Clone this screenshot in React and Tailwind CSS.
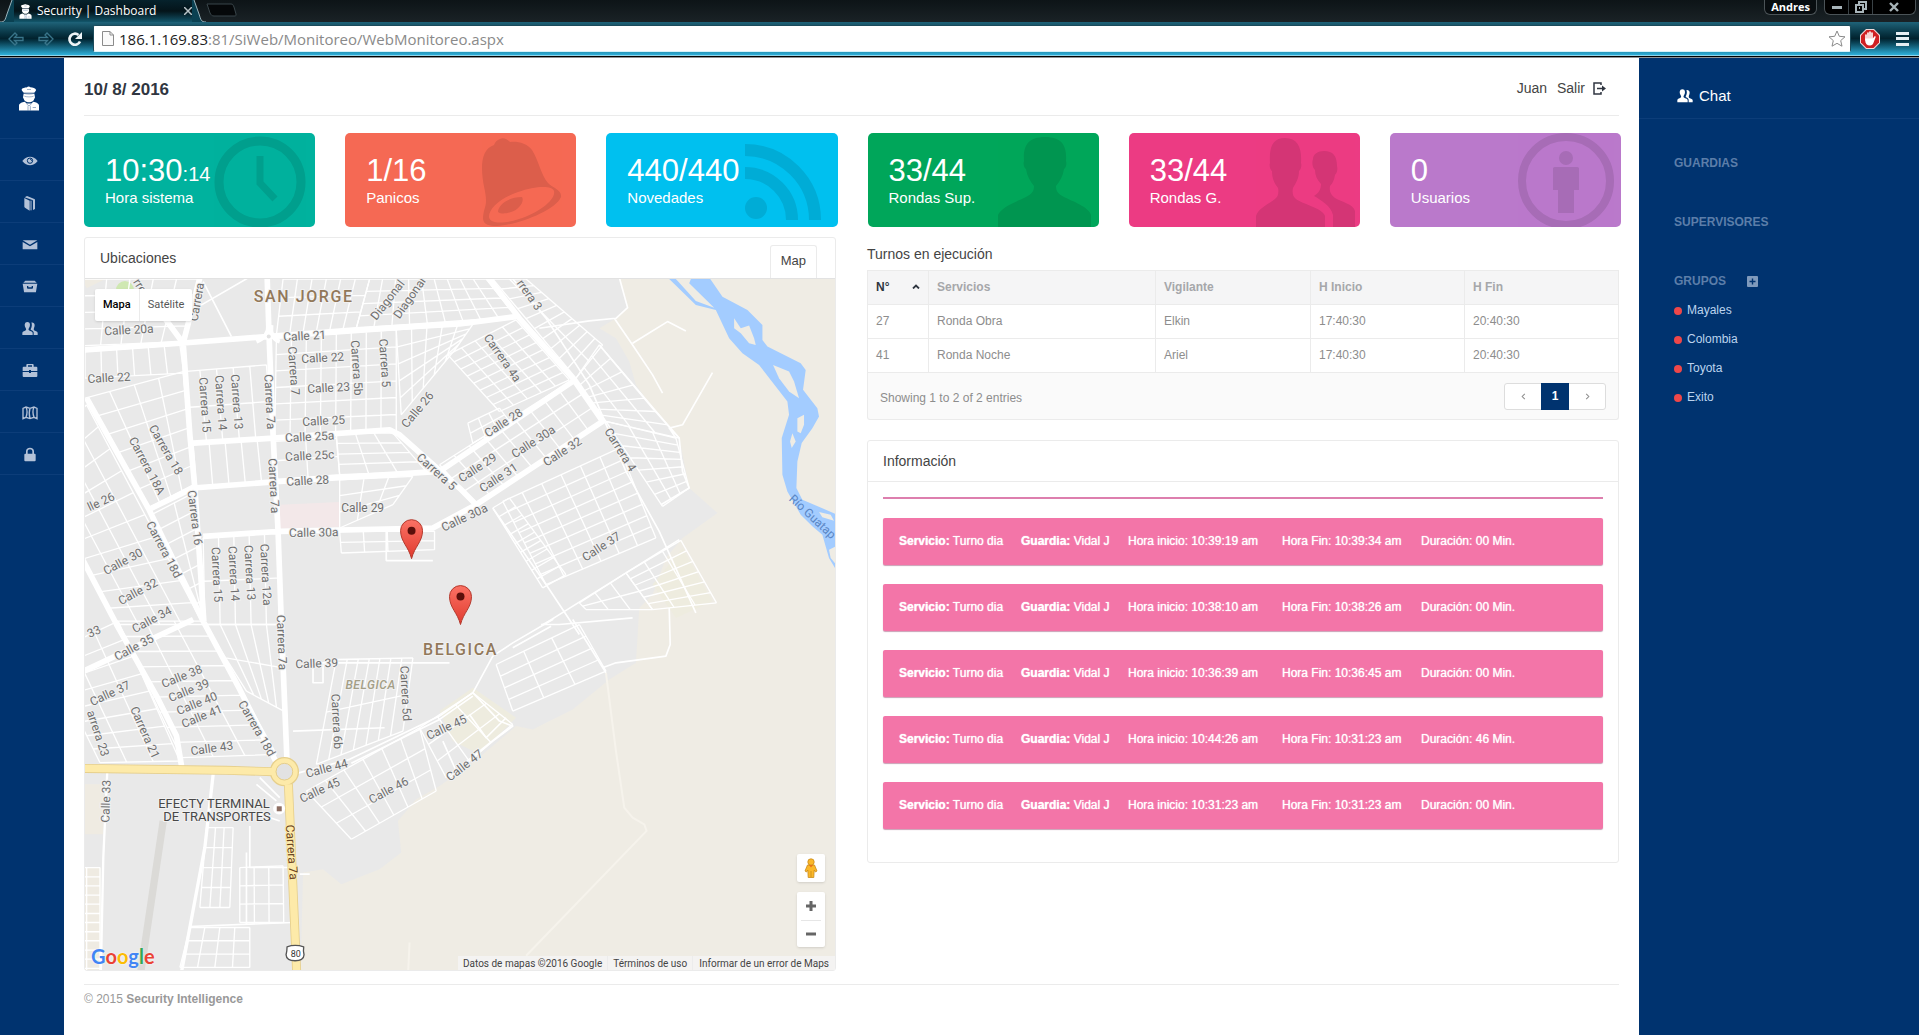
import React from "react";

/* ---------- Small icons ---------- */

function Officer({ className }) {
  return (
    <svg viewBox="0 0 60 74" className={className} aria-hidden="true">
      <g fill="#fff">
        <path d="M8 10C9 5 18 4 24 3c2-3 8-3 10 0 7 1 16 3 17 8 0 4-3 6-5 9H14C12 16 8 14 8 10Z" />
        <path d="M14 22h32l2 12c-1 3-3 5-4 8-3 4-9 6-14 6s-11-2-14-6c-1-3-3-5-4-8Z" />
        <path d="M0 73V58c1-7 9-9 17-11l6 5h14l6-5c8 2 16 4 17 11v15Z" />
      </g>
      <path d="M13 21c10 4 24 4 34 0M16 30c9 3 19 3 28 0M24 10h12" fill="none" stroke="#00336f" strokeWidth="2" opacity=".55" />
      <path d="M23 54l7 5 7-5M27 60v13M34 60v13M41 64h10" fill="none" stroke="#00336f" strokeWidth="2" opacity=".6" />
    </svg>
  );
}

function Users({ className }) {
  return (
    <svg viewBox="0 0 48 42" className={className} fill="currentColor" aria-hidden="true">
      <path d="M1 40v-7c1-4 8-5 11-8 1-2 0-4-1-6-2-3-3-7-3-10C9 3 12 1 16 1s8 2 8 8c0 3-1 7-3 10-1 2-2 4-1 6 3 3 11 4 12 8v7Z" />
      <path d="M28 3c5-1 10 1 10 8 0 3-1 6-2 8-1 3-1 5 0 7 3 2 10 3 11 7v7H35v-8c-1-4-5-6-9-8 0-2 1-4 2-6 2-5 2-11 0-16Z" />
    </svg>
  );
}

const navIcons = {
  eye: (
    <>
      <path d="M1 24C8 14 16 11 24 11s16 3 23 13c-7 9-15 13-23 13S8 33 1 24Z" fill="currentColor" />
      <circle cx="24" cy="23" r="8" fill="none" stroke="#00336f" strokeWidth="3" />
      <path d="M24 19c3 0 5 2 5 5" fill="none" stroke="#00336f" strokeWidth="3" />
    </>
  ),
  book: (
    <>
      <path d="M7 9l16 8v30L9 38c-2-1-2-2-2-4Z" fill="currentColor" />
      <path d="M8 7l7-4 22 9c2 1 2 2 2 4v26l-6 3V18c0-1 0-2-2-3Z" fill="currentColor" />
      <path d="M27 17v29" stroke="currentColor" strokeWidth="3" />
    </>
  ),
  mail: <path d="M2 10h44L24 23ZM2 15l22 13 22-13v22H2Z" fill="currentColor" />,
  drawer: (
    <path
      d="M10 5h28l6 6H4ZM2 14h44l-4 24c0 2-1 2-3 2H9c-2 0-3 0-3-2ZM15 21v5c0 2 1 3 3 3h12c2 0 3-1 3-3v-5h-4v4H19v-4Z"
      fill="currentColor"
      fillRule="evenodd"
    />
  ),
  users: (
    <g fill="currentColor">
      <path d="M1 42v-7c1-4 8-5 11-8 1-2 0-4-1-6-2-3-3-7-3-10C9 5 12 3 16 3s8 2 8 8c0 3-1 7-3 10-1 2-2 4-1 6 3 3 11 4 12 8v7Z" />
      <path d="M28 5c5-1 10 1 10 8 0 3-1 6-2 8-1 3-1 5 0 7 3 2 10 3 11 7v7H35v-8c-1-4-5-6-9-8 0-2 1-4 2-6 2-5 2-11 0-16Z" />
    </g>
  ),
  briefcase: (
    <path
      d="M13 11V7c0-3 1-4 4-4h14c3 0 4 1 4 4v4h8c2 0 3 1 3 3v10H27v-3h-6v3H2V14c0-2 1-3 3-3ZM18 7v4h12V7ZM2 27h19v3h6v-3h19v12c0 2-1 3-3 3H5c-2 0-3-1-3-3Z"
      fill="currentColor"
      fillRule="evenodd"
    />
  ),
  map: (
    <path
      d="M3 10l9-4 12 4 12-4 9 4v31l-9-4-12 4-12-4-9 4ZM12 6c4 9 4 20 0 31M24 10c-3 9-3 20 0 31M36 6c-4 9-4 20 0 31"
      fill="none"
      stroke="currentColor"
      strokeWidth="4"
    />
  ),
  lock: (
    <path
      d="M12 20v-7c0-7 5-11 12-11s12 4 12 11v7h2c2 0 3 1 3 3v17c0 2-1 3-3 3H10c-2 0-3-1-3-3V23c0-2 1-3 3-3ZM17 20h14v-7c0-4-3-6-7-6s-7 2-7 6Z"
      fill="currentColor"
      fillRule="evenodd"
    />
  ),
};

/* ---------- Browser window ---------- */

function BrowserChrome() {
  return (
    <header className="font-['Open_Sans',sans-serif]">
      <div className="flex h-[22px] items-start justify-between bg-linear-to-b from-[#0d1417] to-[#1a2226]">
        <div className="flex">
          <div className="flex h-[22px] w-[206px] items-center">
            <svg viewBox="0 0 14 22" className="h-[22px] w-3.5 shrink-0" aria-hidden="true">
              <path d="M0 22C5 22 5 20 7 14L12 0h2v22Z" fill="#0a4152" />
              <path d="M0 22C5 22 5 20 7 14L12 0" fill="none" stroke="#9bb4bd" />
            </svg>
            <div className="flex h-full flex-1 items-center bg-linear-to-b from-[#06222c] via-[#04141a] to-[#12566b] pl-1">
              <Officer className="h-[15px] w-[15px]" />
              <span className="ml-1 flex-1 text-[12px] whitespace-nowrap text-white">Security | Dashboard</span>
              <button type="button" aria-label="Cerrar pestaña" className="text-[#b9c4c8]">
                <svg viewBox="0 0 8 8" className="h-2 w-2" aria-hidden="true">
                  <path d="M0 0l8 8M8 0L0 8" stroke="currentColor" strokeWidth="1.5" />
                </svg>
              </button>
            </div>
            <svg viewBox="0 0 14 22" className="h-[22px] w-3.5 shrink-0" aria-hidden="true">
              <path d="M14 22C9 22 9 20 7 14L2 0H0v22Z" fill="#0a4152" />
              <path d="M14 22C9 22 9 20 7 14L2 0" fill="none" stroke="#9bb4bd" />
            </svg>
          </div>
          <svg viewBox="0 0 32 14" className="mt-[3px] h-3.5 w-8" aria-hidden="true">
            <path d="M1 1h24c2 0 2 1 3 3l2 7c0 2 0 2-2 2H8c-2 0-3-1-4-3Z" fill="#05080a" stroke="#39454a" />
          </svg>
        </div>
        <div className="mr-[3px] flex gap-[7px]">
          <button type="button" className="h-[15px] rounded-b-md border border-t-0 border-[#4b5357] bg-[#080d10] px-1.5 text-[11px] leading-3 font-bold text-white">
            Andres
          </button>
          <div className="flex h-[15px] rounded-b-md border border-t-0 border-[#4b5357] bg-black text-[#a8b4b9]">
            <button type="button" aria-label="Minimizar" className="flex w-6 items-center justify-center border-r border-[#3a4246]">
              <span className="h-[3px] w-2.5 bg-current" />
            </button>
            <button type="button" aria-label="Restaurar" className="flex w-6 items-center justify-center border-r border-[#3a4246]">
              <svg viewBox="0 0 12 12" className="h-3 w-3" fill="none" stroke="currentColor" strokeWidth="2" aria-hidden="true">
                <path d="M4 3V1h7v7H9M1 4h7v7H1ZM4 7h1" />
              </svg>
            </button>
            <button type="button" aria-label="Cerrar" className="flex w-[42px] items-center justify-center">
              <svg viewBox="0 0 10 10" className="h-2.5 w-2.5" aria-hidden="true">
                <path d="M1 1l8 8M9 1L1 9" stroke="currentColor" strokeWidth="2.4" />
              </svg>
            </button>
          </div>
        </div>
      </div>
      <div className="flex h-[33px] items-center bg-linear-to-b from-[#1f6379] via-[#02222e] to-[#2fb0da]">
        <div className="flex w-[87px] items-center justify-between pr-1 pl-2">
          <button type="button" aria-label="Atrás" className="text-[#39758a]">
            <svg viewBox="0 0 16 14" className="h-3.5 w-4" fill="none" stroke="currentColor" strokeWidth="1.3" aria-hidden="true">
              <path d="M1 7l6-6 2 2-2.500 2.500H15v3H6.500L9 11l-2 2Z" />
            </svg>
          </button>
          <button type="button" aria-label="Adelante" className="text-[#39758a]">
            <svg viewBox="0 0 16 14" className="h-3.5 w-4" fill="none" stroke="currentColor" strokeWidth="1.3" aria-hidden="true">
              <path d="M15 7L9 1 7 3l2.500 2.500H1v3h8.500L7 11l2 2Z" />
            </svg>
          </button>
          <button type="button" aria-label="Recargar" className="text-[#eef4f6]">
            <svg viewBox="0 0 16 16" className="h-4 w-4" aria-hidden="true">
              <path d="M13 10.500A5.500 5.500 0 1 1 11.500 4" fill="none" stroke="currentColor" strokeWidth="2.700" />
              <path d="M15 1v7H8Z" fill="currentColor" />
            </svg>
          </button>
        </div>
        <div className="ml-1.5 flex h-[27px] flex-1 items-center rounded-xs border border-[#1c4b5b] border-b-[#d6f3fb] bg-white px-2">
          <svg viewBox="0 0 12 15" className="h-[15px] w-3 shrink-0" fill="#fafafa" stroke="#8b8b8b" aria-hidden="true">
            <path d="M.5.5H8L11.500 4v10.500H.5ZM8 .5V4h3.500" />
          </svg>
          <p className="ml-[5px] flex-1 text-[15px] leading-6 text-[#8a8a8a]">
            <span className="text-[#1d1d1d]">186.1.169.83</span>:81/SiWeb/Monitoreo/WebMonitoreo.aspx
          </p>
          <button type="button" aria-label="Marcador" className="-mr-1">
            <svg viewBox="0 0 18 18" className="h-[18px] w-[18px]" fill="#fff" stroke="#8a8a8a" aria-hidden="true">
              <path d="M9 1l2.300 5.300 5.700.5-4.300 3.800 1.300 5.600L9 13.300 4 16.200l1.300-5.600L1 6.800l5.700-.5Z" />
            </svg>
          </button>
        </div>
        <button type="button" aria-label="Bloqueador" className="ml-[9px]">
          <svg viewBox="0 0 20 20" className="h-5 w-5" aria-hidden="true">
            <path d="M6 0h8l6 6v8l-6 6H6l-6-6V6Z" fill="#f1dada" />
            <path d="M6.500 1h7L19 6.500v7L13.500 19h-7L1 13.500v-7Z" fill="#cf1f22" />
            <path d="M6 11V6m2 4V4m2 6V3m2 7V4" stroke="#fff" strokeWidth="1.600" strokeLinecap="round" />
            <path d="M5.200 9.500h7.600l2-2.500 1 .8-2.300 6c-.7 1.800-1.700 2.700-3.500 2.700-3 0-4.800-2-4.800-5Z" fill="#fff" />
          </svg>
        </button>
        <button type="button" aria-label="Menú" className="mr-2.5 ml-4 flex h-3.5 w-[13px] flex-col justify-between">
          <span className="h-[3px] w-full bg-[#e6eef2]" />
          <span className="h-[3px] w-full bg-[#e6eef2]" />
          <span className="h-[3px] w-full bg-[#e6eef2]" />
        </button>
      </div>
      <div className="h-[3px] border-t border-b border-t-[#8ed4ea] border-b-[#8f9396] bg-black" />
    </header>
  );
}

/* ---------- Sidebars ---------- */

const navItems = [
  ["eye", "Monitoreo"],
  ["book", "Libro"],
  ["mail", "Mensajes"],
  ["drawer", "Archivo"],
  ["users", "Usuarios"],
  ["briefcase", "Servicios"],
  ["map", "Mapa"],
  ["lock", "Bloquear"],
];

function Sidebar() {
  return (
    <aside className="w-16 shrink-0 bg-[#00336f]">
      <div className="flex h-20 items-center justify-center pt-1 pb-[3px]">
        <a href="#inicio" aria-label="Inicio" className="-ml-1.5">
          <Officer className="h-[25px] w-5" />
        </a>
      </div>
      <nav aria-label="Principal" className="border-b border-[#0c3d79]">
        {navItems.map(([icon, label]) => (
          <a
            key={icon}
            href={"#" + icon}
            aria-label={label}
            className="flex h-[42px] items-center justify-center border-t border-[#0c3d79] pt-0.5 pr-1 text-[#b3c2d8]"
          >
            <svg viewBox="0 0 48 48" className="h-4 w-4" aria-hidden="true">
              {navIcons[icon]}
            </svg>
          </a>
        ))}
      </nav>
    </aside>
  );
}

function Chat() {
  return (
    <aside className="w-[280px] shrink-0 bg-[#00336f]">
      <h2 className="flex h-[61px] items-center gap-1.5 border-b border-[#0c3d79] pt-4 pl-[38px] text-[15px] text-white">
        <Users className="h-3.5 w-4" />
        Chat
      </h2>
      <div className="pl-[35px] text-[12px] leading-[29px]">
        <h3 className="mt-[30px] font-bold text-[#5c7ea9]">GUARDIAS</h3>
        <h3 className="mt-[30px] font-bold text-[#5c7ea9]">SUPERVISORES</h3>
        <h3 className="mt-[30px] flex items-center gap-[21px] font-bold text-[#5c7ea9]">
          GRUPOS
          <button type="button" aria-label="Agregar grupo" className="text-[#7f9abc]">
            <svg viewBox="0 0 11 11" className="h-[11px] w-[11px]" aria-hidden="true">
              <rect width="11" height="11" rx="1" fill="currentColor" />
              <path d="M5.500 2.500v6M2.500 5.500h6" stroke="#00336f" strokeWidth="1.400" />
            </svg>
          </button>
        </h3>
        <ul>
          {["Mayales", "Colombia", "Toyota", "Exito"].map((g) => (
            <li key={g}>
              <a href={"#" + g} className="flex items-center gap-[5px] text-[#bcd3ee]">
                <span className="h-2 w-2 rounded-full bg-[#ee4749]" />
                {g}
              </a>
            </li>
          ))}
        </ul>
      </div>
    </aside>
  );
}

/* ---------- Stat tiles ---------- */

const tiles = [
  {
    value: "10:30",
    small: ":14",
    label: "Hora sistema",
    bg: "bg-[#00b29e]",
    art: (
      <g fill="none" stroke="#000">
        <circle cx="176" cy="49" r="41" strokeWidth="9" />
        <path d="M176 23v27l15 16" strokeWidth="7" />
      </g>
    ),
  },
  {
    value: "1/16",
    label: "Panicos",
    bg: "bg-[#f56954]",
    art: (
      <>
        <path
          fillRule="evenodd"
          d="M155 6c-3 1-5 3-6 6-9 3-12 12-12 23 0 15 4 23 4 33 0 6-3 10-3 18 1 6 6 7 14 7 20-1 58-15 64-29 1-7-8-9-13-14-7-8-9-22-16-33-5-7-15-9-22-8-3-3-7-5-10-3ZM144 84c0-9 12-19 29-25 17-6 34-7 36-1 2 9-16 22-35 28-15 5-29 5-30-2Z"
        />
        <path d="M153 79c0-7 10-15 24-15 3 5-4 13-11 15-6 2-10 2-13 0Z" />
      </>
    ),
  },
  {
    value: "440/440",
    label: "Novedades",
    bg: "bg-[#00c0ef]",
    art: (
      <>
        <circle cx="149" cy="75" r="11" />
        <path d="M138 40a47 47 0 0 1 47 47M138 17a70 70 0 0 1 70 70" fill="none" stroke="#000" strokeWidth="12" />
      </>
    ),
  },
  {
    value: "33/44",
    label: "Rondas Sup.",
    bg: "bg-[#00a65a]",
    art: (
      <path d="M130 94V82c3-8 20-14 28-18 6-3 8-6 8-11-4-5-7-10-8-17-2-1-3-5-2-8-1-14 3-24 21-24s22 10 21 24c1 3 0 7-2 8-1 7-4 12-8 17 0 5 2 8 8 11 8 4 25 10 27 18v12Z" />
    ),
  },
  {
    value: "33/44",
    label: "Rondas G.",
    bg: "bg-[#ec3b83]",
    art: (
      <>
        <path d="M127 94V83c2-8 13-12 19-17 3-2 4-6 3-11-4-5-6-10-6-17-2-1-3-6-2-8-1-15 2-25 15-25s17 10 16 25c1 2 0 7-2 8 0 7-3 12-6 17-1 5 0 9 3 11 6 5 27 9 29 17v11Z" />
        <path d="M204 94V82c-2-9-12-15-19-19 5-3 7-7 7-12-4-4-6-9-6-14-3-3-3-8-2-11 0-5 5-8 11-8 9 0 13 5 13 15 1 3 0 7-2 9-1 5-2 8-5 11-1 5 1 9 5 12 7 4 18 6 20 13v16Z" />
      </>
    ),
  },
  {
    value: "0",
    label: "Usuarios",
    bg: "bg-[#ba79cb]",
    art: (
      <>
        <circle cx="176" cy="48" r="44" fill="none" stroke="#000" strokeWidth="8" />
        <circle cx="176" cy="25" r="7" />
        <path d="M165 34h22c2 0 2 1 2 2v21h-5v23h-16V57h-5V36c0-1 0-2 2-2Z" />
      </>
    ),
  },
];

function Tile({ value, small, label, bg, art }) {
  return (
    <article className={"relative h-[94px] overflow-hidden rounded-[5px] px-[21px] pt-5 text-white " + bg}>
      <svg viewBox="0 0 231 94" className="absolute top-0 right-0 h-[94px] w-[231px] opacity-10" aria-hidden="true">
        {art}
      </svg>
      <p className="relative text-[31px] leading-9">
        {value}
        {small && <span className="text-[20px] leading-5">{small}</span>}
      </p>
      <p className="relative text-[15px] leading-[18px]">{label}</p>
    </article>
  );
}

/* ---------- Street map ---------- */

// Draws the streets of a four-cornered district: nu columns by nv rows.
function District({ q, nu, nv, w = 4 }) {
  const [a, b, c, d] = q;
  const mix = (p, r, t) => [Math.round(p[0] + (r[0] - p[0]) * t), Math.round(p[1] + (r[1] - p[1]) * t)];
  const parts = [];
  for (let i = 0; i <= nu; i++) {
    parts.push("M" + mix(a, b, i / nu) + "L" + mix(d, c, i / nu));
  }
  for (let j = 0; j <= nv; j++) {
    parts.push("M" + mix(a, d, j / nv) + "L" + mix(b, c, j / nv));
  }
  return <path d={parts.join("")} strokeWidth={w} />;
}

const districts = [
  [[[310, 290], [560, 270], [578, 490], [330, 505]], 5, 2],
  [[[15, 230], [300, 210], [312, 295], [15, 310]], 6, 1],
  [[[340, 510], [580, 490], [595, 625], [350, 640]], 5, 1],
  [[[370, 790], [600, 770], [606, 1050], [375, 1050]], 5, 2],
  [[[375, 1050], [606, 1050], [612, 1310], [500, 1250]], 5, 2],
  [[[590, 190], [950, 165], [950, 470], [585, 485]], 8, 6],
  [[[950, 165], [1180, 148], [1130, 220], [965, 420]], 5, 5],
  [[[585, 500], [770, 490], [780, 600], [590, 615]], 2, 2],
  [[[770, 475], [940, 475], [1040, 590], [780, 600]], 3, 4],
  [[[780, 615], [1000, 605], [940, 690], [780, 760]], 3, 3],
  [[[780, 770], [1065, 770], [1065, 825], [785, 835]], 4, 2],
  [[[-60, 12], [360, 12], [305, 200], [-60, 215]], 6, 4],
  [[[610, 12], [870, 12], [830, 160], [590, 180]], 6, 3],
  [[[870, 12], [1220, 12], [1310, 125], [830, 160]], 9, 4],
  [[[15, 370], [310, 290], [340, 630], [205, 700]], 4, 6],
  [[[215, 720], [350, 650], [375, 1030], [365, 1035]], 2, 7],
  [[[20, 390], [370, 1050], [110, 1050], [-150, 560]], 10, 4],
  [[[110, 1040], [370, 1040], [590, 1440], [305, 1450]], 3, 9],
  [[[-100, 1140], [115, 1040], [300, 1460], [60, 1465]], 3, 8],
  [[[1105, 240], [1310, 135], [1470, 315], [1260, 410]], 5, 8],
  [[[1240, 12], [1340, 12], [1570, 210], [1490, 310]], 2, 10],
  [[[1490, 310], [1560, 210], [1800, 490], [1580, 440]], 3, 7],
  [[[1580, 440], [1790, 490], [1830, 640], [1750, 695]], 3, 7],
  [[[1165, 445], [1260, 400], [1290, 440], [1180, 505]], 3, 2],
  [[[1080, 570], [1480, 315], [1570, 440], [1190, 690]], 9, 3],
  [[[1270, 680], [1620, 520], [1730, 790], [1400, 930]], 6, 8],
  [[[1240, 700], [1290, 670], [1460, 900], [1390, 940]], 1, 9],
  [[[1640, 895], [1805, 797], [1912, 985], [1720, 1005]], 3, 6],
  [[[1500, 985], [1640, 895], [1720, 1005], [1520, 1005]], 3, 2],
  [[[1250, 1170], [1500, 1050], [1580, 1190], [1300, 1310]], 3, 4],
  [[[680, 1550], [1020, 1360], [1070, 1550], [815, 1695]], 6, 3],
  [[[1020, 1360], [1180, 1255], [1300, 1350], [1100, 1510]], 3, 3],
  [[[770, 1155], [1000, 1150], [970, 1370], [710, 1470]], 7, 2],
  [[[380, 1660], [460, 1660], [450, 1900], [360, 1900]], 3, 4],
  [[[480, 1780], [610, 1775], [612, 1945], [480, 1945]], 3, 3],
  [[[330, 1960], [510, 1960], [510, 2080], [300, 2080]], 4, 3],
  [[[-20, 1780], [60, 1780], [60, 2110], [-20, 2110]], 2, 12],
];

const avenues =
  "M10 225L300 205 560 185 830 165 1140 147 1310 125M562 0L568 185 580 480 595 770 605 1050 622 1465" +
  "M362 0L310 205 330 480 345 640 372 1040M240 110L310 205M20 370L205 700 370 1040 480 1245 590 1465" +
  "M0 840L110 1050 230 1265 290 1385 305 1475M205 705L340 640 600 620 1080 590 1480 320" +
  "M340 505L580 490 930 465 960 480 1140 640 1190 690 1570 440 1480 310 1320 130 1220 0" +
  "M370 785L600 770 1060 760 1190 690M10 1190L340 1035";

// Street labels: text, x, y, angle. Coordinates are thirds of a map unit.
const streets = [
  ["Calle 20a", 146, 166, -3], ["Calle 22", 87, 308, -3], ["Calle 21", 675, 182, -3], ["Calle 22", 728, 250, -3],
  ["Calle 23", 748, 338, -3], ["Calle 25", 732, 438, -3], ["Calle 25a", 690, 486, -3], ["Calle 25c", 690, 543, -3],
  ["Calle 28", 684, 617, -3], ["Calle 29", 848, 698, 0], ["Calle 30a", 702, 773, -1], ["Carrera 15", 375, 390, 86],
  ["Carrera 14", 423, 385, 86], ["Carrera 13", 472, 380, 86], ["Carrera 7a", 571, 380, 87], ["Carrera 7", 643, 287, 86],
  ["Carrera 5b", 830, 280, 86], ["Carrera 5", 916, 265, 86], ["Calle 26", 1015, 405, -50], ["Carrera 5", 1070, 590, 42],
  ["Carrera 18", 258, 525, 60], ["Carrera 18A", 200, 572, 62], ["Carrera 7a", 582, 632, 87], ["Carrera 16", 346, 730, 83],
  ["Carrera 18d", 252, 825, 62], ["Carrera 15", 412, 900, 87], ["Carrera 14", 462, 897, 87], ["Carrera 13", 509, 893, 87],
  ["Carrera 12a", 557, 900, 87], ["lle 26", 62, 680, -25], ["Calle 30", 128, 862, -28], ["Calle 32", 175, 950, -28],
  ["Calle 34", 217, 1035, -28], ["Calle 35", 163, 1120, -28], ["33", 42, 1070, -25], ["Carrera", 350, 80, -80],
  ["rre", 180, 34, 58], ["Diagonal", 923, 76, -52], ["Diagonal", 990, 70, -55], ["Calle 37", 90, 1256, -25],
  ["Calle 38", 307, 1205, -22], ["Calle 39", 327, 1247, -22], ["Calle 40", 350, 1288, -22], ["Calle 41", 367, 1327, -22],
  ["Calle 43", 395, 1422, -8], ["arrera 23", 54, 1378, 72], ["Carrera 21", 195, 1375, 66], ["Carrera 18d", 532, 1362, 60],
  ["Carrera 7a", 605, 1105, 88], ["Calle 39", 710, 1168, -2], ["Carrera 5d", 979, 1258, 87], ["Carrera 6b", 771, 1340, 87],
  ["Calle 44", 740, 1483, -15], ["Calle 45", 720, 1547, -25], ["Calle 46", 927, 1548, -28], ["Calle 45", 1102, 1360, -25],
  ["Calle 47", 1155, 1472, -38], ["Calle 33", 77, 1580, -88], ["rrera 3", 1350, 60, 55], ["Carrera 4a", 1270, 250, 55],
  ["Calle 28", 1273, 443, -33], ["Calle 30a", 1363, 500, -33], ["Calle 32", 1448, 530, -33], ["Calle 29", 1195, 578, -33],
  ["Calle 31", 1257, 610, -33], ["Calle 30a", 1155, 728, -25], ["Carrera 4", 1622, 525, 58], ["Calle 37", 1567, 817, -33],
];

function Pin({ x, y }) {
  return (
    <g transform={"translate(" + x + " " + y + ")"}>
      <path d="M0 0C-3-12-11-17-11-28a11 11 0 0 1 22 0C11-17 3-12 0 0Z" fill="url(#pin)" stroke="#b3382c" />
      <circle cx="0" cy="-28" r="4" fill="#5a0f0b" />
    </g>
  );
}

function StreetMap() {
  return (
    <svg
      viewBox="5 4 751 692"
      preserveAspectRatio="xMinYMin slice"
      className="block h-full w-full font-['Roboto',sans-serif]"
      role="img"
      aria-label="Mapa de ubicaciones"
    >
      <defs>
        <linearGradient id="pin" x1="0" y1="0" x2="0" y2="1">
          <stop offset="0" stopColor="#fb7265" />
          <stop offset="1" stopColor="#e03a2e" />
        </linearGradient>
      </defs>
      <g transform="scale(0.33333)" fill="none" strokeLinejoin="round">
        <rect x="0" y="0" width="2400" height="2200" fill="#e9e9e9" />
        <path
          d="M1618 0L1645 98 1610 130 1560 160 1610 190 1650 260 1670 330 1720 400 1800 490 1830 640 1915 715 1810 790 1760 850 1720 960 1680 1000 1670 1165 1590 1215 1480 1305 1360 1365 1310 1355 1180 1465 1080 1535 1010 1575 955 1640 965 1735 900 1785 785 1830 730 1785 670 1795 660 2200H2400V0Z"
          fill="#efece4"
        />
        <path d="M1180 1240L1080 1310 1120 1400 1200 1440 1310 1330ZM1720 930L1810 820 1900 980 1790 1030Z" fill="#eeecdf" />
        <path d="M0 1530H70V1680H0ZM0 1780H62V2120H0ZM0 0H100L20 40Z" fill="#efebe2" />
        <path d="M600 690L780 682V756L600 762Z" fill="#f3e8e9" />
        <circle cx="135" cy="45" r="27" fill="#cfe8b2" />
        <path d="M250 1640L180 2110" stroke="#dbdad7" strokeWidth="22" />

        <g fill="#a3ccff">
          <path d="M1840 0H1885L1930 65 2005 105 2050 150V195L2065 215 2165 265 2180 285 2172 345 2215 400 2220 425 2200 460 2168 505 2155 560 2152 640 2170 675 2280 722V900L2250 850 2230 780 2200 755 2165 720 2125 650 2110 600 2108 490 2130 420 2125 380 2040 270 1990 235 1950 190 1910 105 1850 90 1770 12 1790 12 1850 78 1905 98 1830 25Z" />
        </g>
        <g fill="#efece4">
          <path d="M1965 130L1985 160 2010 152 2025 190 2030 210 2010 205 1985 175 1965 160Z" />
          <path d="M2082 270L2130 290 2145 320 2160 370 2130 350 2100 310Z" />
          <path d="M2155 430L2175 420 2175 450 2165 475 2155 470ZM2140 475L2150 500 2138 520 2133 500Z" />
          <path d="M2220 712L2255 720 2265 738 2230 728ZM2250 825L2280 810V880L2255 850Z" />
        </g>

        <g stroke="#fff">
          {districts.map(([q, nu, nv], i) => (
            <District key={i} q={q} nu={nu} nv={nv} />
          ))}
          <g strokeWidth="5">
            <path d="M370 20L455 185M520 0L330 110M920 770V858H1060M640 1370L915 1360M690 1165H1110M700 1165V1225H730V1170" />
            <path d="M1618 0L1645 98 1610 130 1530 138 1380 160M1605 130L1660 210 1720 300 1750 355M1660 205L1700 180 1765 140 1820 168M1900 293L1810 450 1770 460 1790 490M1560 210L1720 400 1800 490 1810 590 1830 640 1745 690" />
            <path d="M1300 12L1400 130 1530 330 1640 590 1740 770 1850 1015M1400 1045L1800 795M1385 1050L1440 1050 1660 1030M1240 700L1400 930 1500 1080" />
            <path d="M1390 1050L1420 1035 1300 1105 1240 1145 1180 1255 1080 1325 810 1455 640 1500M1415 1055L1300 1120M1180 1265L1080 1335 815 1467" />
            <path d="M1770 1000L1773 1110 1760 1145 1610 1165 1570 1180M1480 1035L1580 1195" />
            <path d="M1180 1255L1260 1340 1300 1355 1240 1400 1110 1510M1170 1320L1220 1390 1280 1330M1090 1400L1130 1490" />
            <path d="M330 1957L640 1945M600 1640L540 1620M660 1800H690M500 1735V1950M510 1655V1780H640" />
            <path d="M540 1510L600 1570M530 1530L590 1580" />
          </g>
          <path d="M400 1500L375 1720 300 2120" strokeWidth="10" />
          <path d="M82 1490L70 1750 62 2120" strokeWidth="7" />
          <path d={avenues} strokeWidth="17" />
        </g>
        <path
          d="M1580 1195L1610 1430 1635 1600 1660 1630 1695 1650 1702 1670 1340 2045M990 2005L985 2110"
          stroke="#f6f3ec"
          strokeWidth="6"
        />
        <path d="M565 150Q568 185 530 200M600 200Q570 190 575 150" stroke="#fff" strokeWidth="12" />
        <circle cx="567" cy="185" r="6" fill="#e2e2e2" />

        <g stroke="#e6cf8c">
          <path d="M0 1482L440 1488 580 1492M626 1530L652 2120" strokeWidth="27" />
          <circle cx="614" cy="1492" r="34" strokeWidth="20" />
        </g>
        <g stroke="#fdeaa9">
          <path d="M0 1482L440 1488 580 1492M626 1530L652 2120" strokeWidth="22" />
          <circle cx="614" cy="1492" r="33" strokeWidth="14" />
        </g>
        <circle cx="614" cy="1492" r="25" fill="#e2e2e2" stroke="#e6cf8c" strokeWidth="3" />
        <circle cx="598" cy="1603" r="18" fill="#fff" />
        <rect x="591" y="1596" width="15" height="15" fill="#8d6f63" />
        <path d="M622 2018Q646 2010 672 2018Q670 2030 673 2042Q672 2060 646 2060Q620 2060 619 2042Q622 2030 622 2018Z" fill="#fff" stroke="#555" strokeWidth="4" />
      </g>

      <g fontSize="12" fill="#6f6f6f" stroke="#f1f1f1" strokeWidth="2" paintOrder="stroke" textAnchor="middle" dominantBaseline="central">
        {streets.map(([t, x, y, r], i) => (
          <text key={i} transform={"translate(" + Math.round(x / 3) + " " + Math.round(y / 3) + ") rotate(" + r + ")"}>
            {t}
          </text>
        ))}
        <text transform="translate(212 578) rotate(86)" fill="#6b4423" stroke="#fdeaa9">Carrera 7a</text>
        <text x="291" y="411" fill="#a39e86" fontStyle="italic" fontWeight="500" className="tracking-wider">BELGICA</text>
        <g fontSize="16" fontWeight="500" fill="#92785a" className="tracking-widest">
          <text x="224" y="22">SAN JORGE</text>
          <text x="381" y="375">BELGICA</text>
        </g>
        <g fontSize="13" fill="#484848" textAnchor="end">
          <text x="190" y="529">EFECTY TERMINAL</text>
          <text x="191" y="542">DE TRANSPORTES</text>
        </g>
        <text x="216" y="680" fontSize="9" fill="#333" stroke="none">80</text>
        <text transform="translate(712 222) rotate(43)" textAnchor="start" fill="#5a86c4" stroke="none">Río Guatap</text>
      </g>
      <Pin x={332} y={284} />
      <Pin x={381} y={350} />
    </svg>
  );
}

function MapPanel() {
  return (
    <section className="rounded-[3px] border border-[#ebebeb] bg-white">
      <div className="flex h-10 items-end justify-between pr-[18px] pl-[15px]">
        <h2 className="self-center text-[14px] text-[#444]">Ubicaciones</h2>
        <button type="button" className="relative -mb-px h-[34px] rounded-t-[3px] border border-b-0 border-[#ebebeb] bg-white px-2.5 pb-1 text-[13px] text-[#444]">
          Map
        </button>
      </div>
      <div className="relative h-[692px] overflow-hidden border-t border-[#e2e2e2] font-['Roboto',sans-serif]">
        <StreetMap />
        <div className="absolute top-2.5 left-2.5 flex h-8 rounded-[2px] bg-white text-[11px] shadow-sm">
          <button type="button" className="border-r border-[#ebebeb] px-2 font-medium text-black">Mapa</button>
          <button type="button" className="px-2 text-[#565656]">Satélite</button>
        </div>
        <div className="absolute right-2.5 bottom-[23px] flex w-7 flex-col gap-2.5">
          <button type="button" aria-label="Street View" className="flex h-7 items-center justify-center rounded-[2px] bg-white shadow-sm">
            <svg viewBox="0 0 14 20" className="h-5 w-3.5" aria-hidden="true">
              <path d="M3.500 7h7l2.500 6-1.500 1-1.300-2-.4 7.500H4.200L3.800 12l-1.300 2L1 13Z" fill="#fbb829" stroke="#c98a1b" strokeWidth=".8" />
              <circle cx="7" cy="4" r="3.200" fill="#fbb829" stroke="#c98a1b" strokeWidth=".8" />
              <path d="M5 7l2 2.500L9 7Z" fill="#e8711a" />
              <path d="M7 13v6" stroke="#c98a1b" strokeWidth=".8" />
            </svg>
          </button>
          <div className="flex flex-col rounded-[2px] bg-white text-[#666] shadow-sm">
            <button type="button" aria-label="Acercar" className="flex h-7 items-center justify-center">
              <svg viewBox="0 0 12 12" className="h-3 w-3" aria-hidden="true">
                <path d="M6 1v10M1 6h10" stroke="currentColor" strokeWidth="3" />
              </svg>
            </button>
            <span className="mx-1 h-px bg-[#e6e6e6]" />
            <button type="button" aria-label="Alejar" className="flex h-[26px] items-center justify-center">
              <svg viewBox="0 0 12 12" className="h-3 w-3" aria-hidden="true">
                <path d="M1 6h10" stroke="currentColor" strokeWidth="3" />
              </svg>
            </button>
          </div>
        </div>
        <a href="#google" className="absolute bottom-1 left-1.5 font-['Lato',sans-serif] text-[20px] leading-5 font-bold [text-shadow:0_0_2px_#fff]">
          <span className="text-[#4285f4]">G</span>
          <span className="text-[#ea4335]">o</span>
          <span className="text-[#fbbc05]">o</span>
          <span className="text-[#4285f4]">g</span>
          <span className="text-[#34a853]">l</span>
          <span className="text-[#ea4335]">e</span>
        </a>
        <div className="absolute right-0 bottom-0 flex h-3.5 items-center bg-[#f5f5f5]/80 text-[10px] text-[#444]">
          <span className="px-[5px]">Datos de mapas ©2016 Google</span>
          <a href="#terminos" className="border-l border-[#ececec] px-[5px]">Términos de uso</a>
          <a href="#error" className="border-l border-[#ececec] px-1.5">Informar de un error de Maps</a>
        </div>
      </div>
    </section>
  );
}

/* ---------- Shifts table ---------- */

const rows = [
  ["27", "Ronda Obra", "Elkin", "17:40:30", "20:40:30"],
  ["41", "Ronda Noche", "Ariel", "17:40:30", "20:40:30"],
];

function Shifts() {
  return (
    <section className="text-[12px]">
      <h2 className="h-[33px] text-[14px] leading-[34px] text-[#444]">Turnos en ejecución</h2>
      <table className="w-full table-fixed border-collapse text-left text-[#8d8d8d]">
        <colgroup>
          <col className="w-[61px]" />
          <col className="w-[227px]" />
          <col className="w-[155px]" />
          <col className="w-[154px]" />
          <col className="w-[154px]" />
        </colgroup>
        <thead>
          <tr className="h-[34px] bg-[#f5f5f6] text-[#a6a7aa]">
            <th scope="col" className="border border-[#ebebeb] px-2 pb-0.5 text-[#303641]">
              <button type="button" className="flex w-full items-center justify-between font-bold">
                N°
                <svg viewBox="0 0 8 5" className="h-[5px] w-2" aria-hidden="true">
                  <path d="M1 4.500l3-3 3 3" fill="none" stroke="currentColor" strokeWidth="1.800" />
                </svg>
              </button>
            </th>
            {["Servicios", "Vigilante", "H Inicio", "H Fin"].map((h) => (
              <th key={h} scope="col" className="border border-[#ebebeb] px-2 pb-0.5 font-bold">{h}</th>
            ))}
          </tr>
        </thead>
        <tbody>
          {rows.map((r) => (
            <tr key={r[0]} className="h-[34px]">
              {r.map((c, i) => (
                <td key={i} className="border border-[#ebebeb] px-2 pb-0.5">{c}</td>
              ))}
            </tr>
          ))}
        </tbody>
      </table>
      <div className="flex h-[47px] items-center justify-between rounded-b-[3px] border border-t-0 border-[#ebebeb] bg-[#fafafa] px-3 text-[#8d8d8d]">
        <p className="pt-1">Showing 1 to 2 of 2 entries</p>
        <nav aria-label="Páginas" className="flex h-[27px] rounded-[3px] border border-[#ddd] bg-white">
          <button type="button" aria-label="Anterior" className="flex w-9 items-center justify-center">
            <svg viewBox="0 0 5 8" className="h-[7px] w-[5px]" aria-hidden="true">
              <path d="M4 1L1 4l3 3" fill="none" stroke="currentColor" strokeWidth="1.200" />
            </svg>
          </button>
          <button type="button" aria-current="page" className="-my-px w-7 bg-[#00336f] font-bold text-white">1</button>
          <button type="button" aria-label="Siguiente" className="flex w-9 items-center justify-center">
            <svg viewBox="0 0 5 8" className="h-[7px] w-[5px]" aria-hidden="true">
              <path d="M1 1l3 3-3 3" fill="none" stroke="currentColor" strokeWidth="1.200" />
            </svg>
          </button>
        </nav>
      </div>
    </section>
  );
}

/* ---------- Information feed ---------- */

const events = [
  ["10:39:19", "10:39:34", "00"],
  ["10:38:10", "10:38:26", "00"],
  ["10:36:39", "10:36:45", "00"],
  ["10:44:26", "10:31:23", "46"],
  ["10:31:23", "10:31:23", "00"],
];

function Information() {
  return (
    <section className="mt-5 rounded-[3px] border border-[#ebebeb]">
      <h2 className="h-[41px] border-b border-[#ebebeb] pl-[15px] text-[14px] leading-10 text-[#444]">Información</h2>
      <ul className="flex flex-col gap-[19px] px-[15px] pt-[15px] pb-[33px] text-[12px] text-white">
        <li className="h-0.5 bg-[#dd7fae]" />
        {events.map(([from, to, min], i) => (
          <li
            key={i}
            className="grid h-[47px] grid-cols-[122px_107px_154px_139px_1fr] items-center rounded-xs bg-[#f375a8] px-4 pb-0.5 whitespace-nowrap shadow-[0_1px_1px_#c9a0b5] [text-shadow:0_0_1px_#fff]"
          >
            <span><b>Servicio:</b> Turno dia</span>
            <span><b>Guardia:</b> Vidal J</span>
            <span>Hora inicio: {from} am</span>
            <span>Hora Fin: {to} am</span>
            <span>Duración: {min} Min.</span>
          </li>
        ))}
      </ul>
    </section>
  );
}

/* ---------- Page ---------- */

export default function App() {
  return (
    <div className="flex min-h-screen flex-col bg-white font-['Liberation_Sans',Arial,sans-serif]">
      <BrowserChrome />
      <div className="flex flex-1">
        <Sidebar />
        <main className="min-w-0 flex-1 px-5">
          <div className="flex h-[58px] items-center justify-between border-b border-[#ebebeb] pt-1.5">
            <h1 className="text-[17px] font-bold text-[#303641]">10/ 8/ 2016</h1>
            <div className="flex items-center gap-2.5 pr-[13px] pb-0.5 text-[14px] text-[#444]">
              <a href="#juan">Juan</a>
              <a href="#salir" className="flex items-center gap-2">
                Salir
                <svg viewBox="0 0 13 13" className="h-[13px] w-[13px]" aria-hidden="true">
                  <path d="M8 3V1H1v11h7v-2M4 6.500h7" fill="none" stroke="#303641" strokeWidth="1.500" />
                  <path d="M9 3.500l4 3-4 3Z" fill="#303641" />
                </svg>
              </a>
            </div>
          </div>
          <div className="mt-[17px] -mr-0.5 grid grid-cols-6 gap-[30px]">
            {tiles.map((t) => (
              <Tile key={t.label} {...t} />
            ))}
          </div>
          <div className="mt-2.5 grid grid-cols-2 gap-[31px]">
            <MapPanel />
            <div>
              <Shifts />
              <Information />
            </div>
          </div>
          <footer className="mt-[13px] border-t border-[#ebebeb] pt-1.5 text-[12px] leading-4 text-[#999]">
            © 2015 <b>Security Intelligence</b>
          </footer>
        </main>
        <Chat />
      </div>
    </div>
  );
}
